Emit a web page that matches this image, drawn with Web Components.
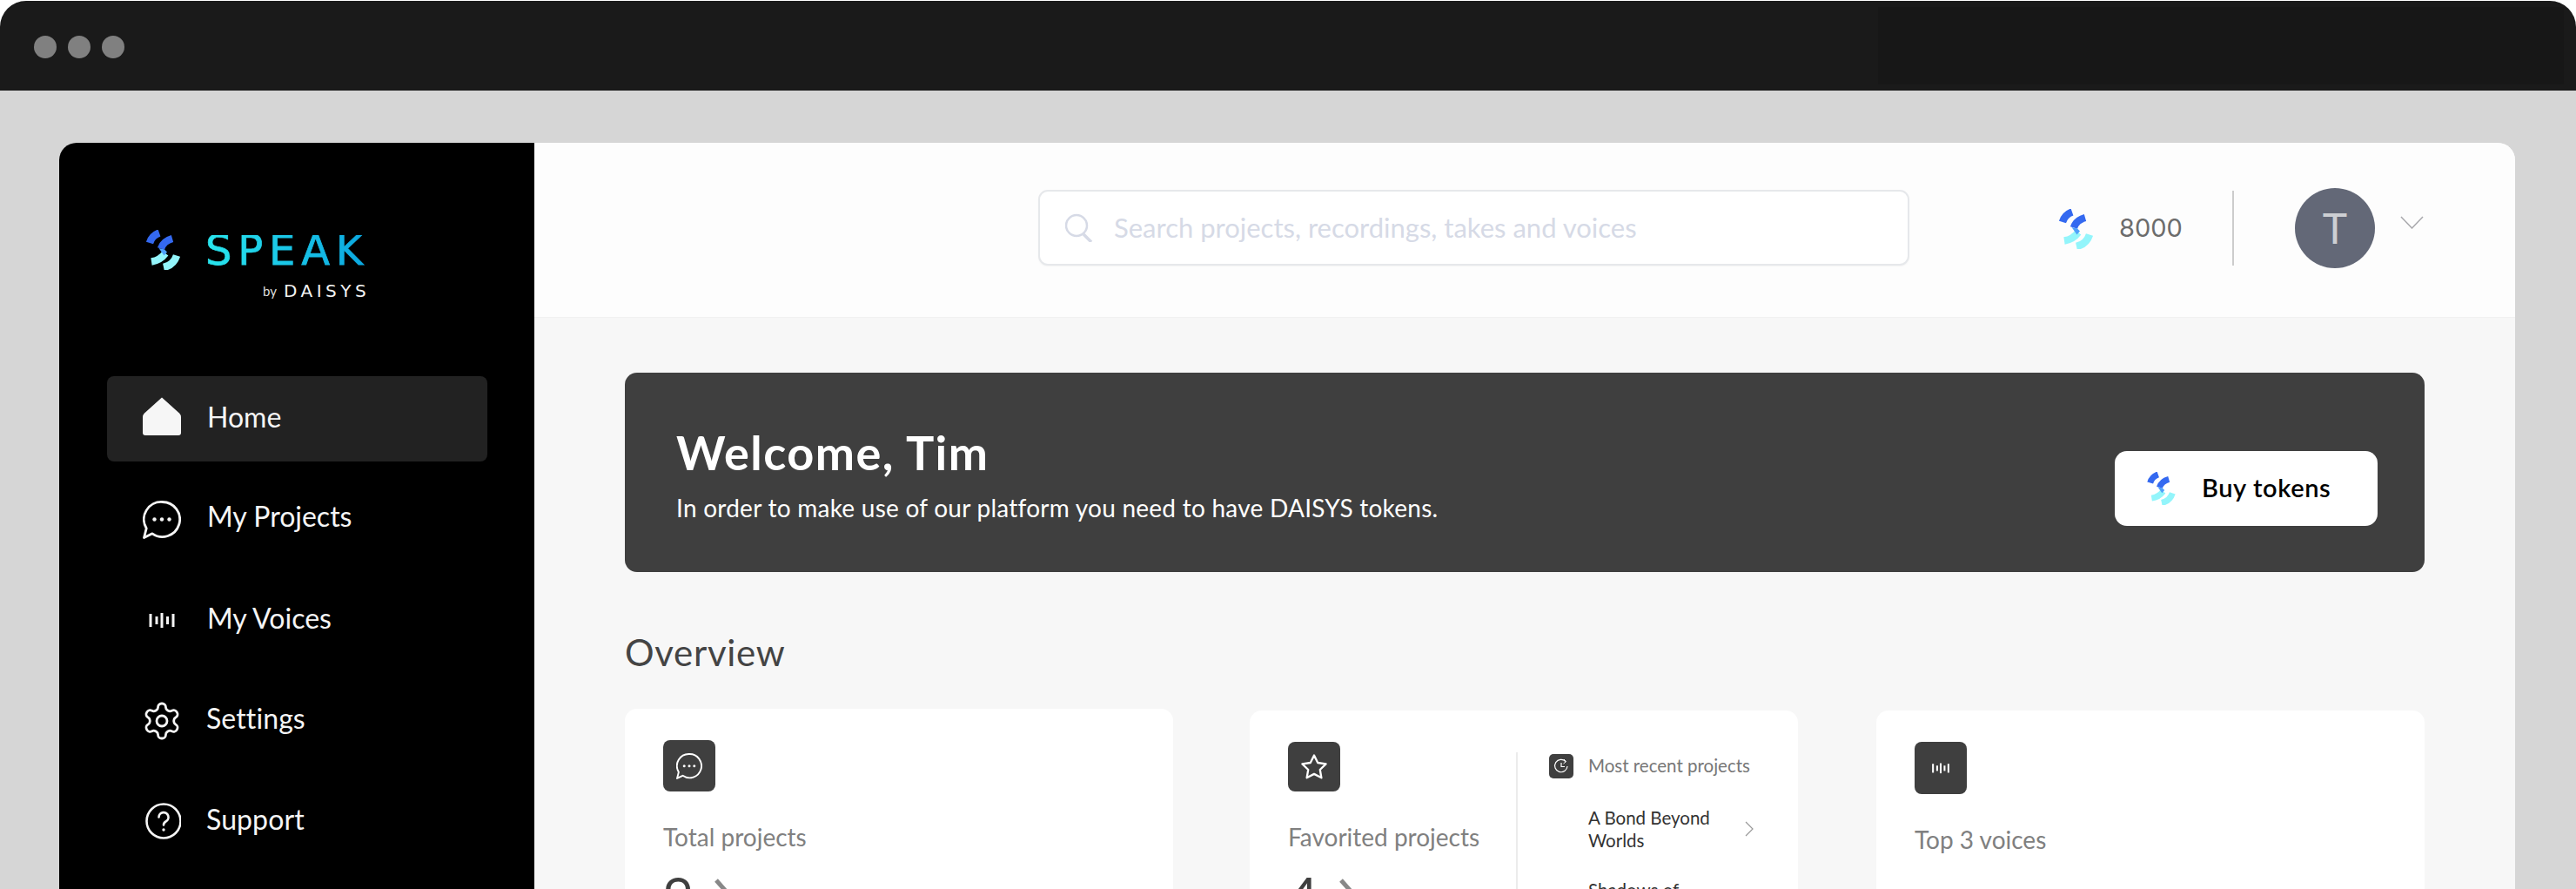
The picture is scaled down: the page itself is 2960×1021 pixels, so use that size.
<!DOCTYPE html>
<html><head><meta charset="utf-8"><title>Speak</title>
<style>html,body{margin:0;height:1021px;overflow:hidden;background:#fff;font-family:Lato,"Open Sans",sans-serif}</style>
</head><body>
<browser-frame>
  <app-sidebar slot="side">
    <nav-item active icon="home" label="Home"></nav-item>
    <nav-item icon="chat" label="My Projects"></nav-item>
    <nav-item icon="bars" label="My Voices"></nav-item>
    <nav-item icon="gear" label="Settings"></nav-item>
    <nav-item icon="help" label="Support"></nav-item>
  </app-sidebar>
  <app-header slot="head"></app-header>
  <welcome-banner></welcome-banner>
  <overview-section>
    <stat-card icon="chat" label="Total projects" value="9"></stat-card>
    <stat-card icon="star" label="Favorited projects" value="4" split>
      <recent-list></recent-list>
    </stat-card>
    <stat-card icon="bars" label="Top 3 voices" voices></stat-card>
  </overview-section>
</browser-frame>
<script>
const ICONS={
 home:'<svg viewBox="0 0 44 44" width="44" height="44"><path fill="#f6f6f6" d="M22 .5 42 18.500q2 2 2 4.500V41a3 3 0 0 1-3 3H3a3 3 0 0 1-3-3V23q0-2.500 2-4.500Z"/></svg>',
 chat:'<svg viewBox="0 0 44 44" width="44" height="44" fill="none" stroke="currentColor" stroke-width="2.800" stroke-linejoin="round"><path d="M22.500 1.500a20 20 0 1 1-11.500 36.300L1.500 42.500l2.700-10.700A20 20 0 0 1 22.500 1.500Z"/><g fill="currentColor" stroke="none"><circle cx="13.500" cy="21.500" r="2.200"/><circle cx="22" cy="21.500" r="2.200"/><circle cx="30.500" cy="21.500" r="2.200"/></g></svg>',
 bars:'<svg viewBox="0 0 44 44" width="44" height="44" fill="currentColor"><rect x="7.500" y="15" width="3" height="15"/><rect x="14.500" y="18" width="3" height="9"/><rect x="20.500" y="14" width="3" height="17"/><rect x="27" y="18" width="3" height="9"/><rect x="33.500" y="15" width="3" height="15"/></svg>',
 gear:'<svg viewBox="1 1 22 22" width="44" height="44" fill="none" stroke="currentColor" stroke-width="1.400" stroke-linejoin="round"><path d="M12.220 2h-.44a2 2 0 0 0-2 2v.18a2 2 0 0 1-1 1.730l-.43.250a2 2 0 0 1-2 0l-.15-.08a2 2 0 0 0-2.730.730l-.22.380a2 2 0 0 0 .730 2.730l.150.100a2 2 0 0 1 1 1.720v.510a2 2 0 0 1-1 1.740l-.15.090a2 2 0 0 0-.73 2.730l.220.380a2 2 0 0 0 2.730.730l.150-.08a2 2 0 0 1 2 0l.430.250a2 2 0 0 1 1 1.730V20a2 2 0 0 0 2 2h.440a2 2 0 0 0 2-2v-.18a2 2 0 0 1 1-1.730l.430-.25a2 2 0 0 1 2 0l.150.080a2 2 0 0 0 2.730-.73l.220-.39a2 2 0 0 0-.73-2.730l-.15-.08a2 2 0 0 1-1-1.740v-.5a2 2 0 0 1 1-1.740l.150-.09a2 2 0 0 0 .730-2.730l-.22-.38a2 2 0 0 0-2.730-.73l-.15.080a2 2 0 0 1-2 0l-.43-.25a2 2 0 0 1-1-1.730V4a2 2 0 0 0-2-2Z"/><circle cx="12" cy="12" r="3"/></svg>',
 help:'<svg viewBox="0 0 44 44" width="44" height="44" fill="none" stroke="currentColor" stroke-width="2.600" stroke-linecap="round"><circle cx="24" cy="22" r="19.500"/><path d="M18.500 17.500a5.500 5.500 0 1 1 8 5c-1.800 1-2.500 2-2.500 4"/><circle cx="24" cy="32" r="1.700" fill="currentColor" stroke="none"/></svg>',
 star:'<svg viewBox="1.500 1.500 21 21" width="32" height="32" fill="none" stroke="currentColor" stroke-width="1.600" stroke-linejoin="round"><path d="M12 2.500l2.950 6 6.550.95-4.750 4.620 1.120 6.530L12 17.520 6.130 20.600l1.120-6.530L2.500 9.450l6.550-.95Z"/></svg>'
};
function mark(w,h){return `<svg viewBox="0 0 39 46" width="${w}" height="${h}" fill="none" stroke-width="8.500"><path stroke="#93f5fb" d="M6 36.500Q16 35 22 27"/><path stroke="#93f5fb" d="M20 43Q31.500 40.500 35 29.500"/><path stroke="#3469f0" d="M4 15Q6.500 6.500 15 3.500"/><path stroke="#3469f0" d="M17 21.500Q19.500 13 30 10"/><path stroke="none" fill="#4fa0fa" d="M14.500 21l6.500 1.500 3 3-3.500 4Z"/></svg>`}
function def(name,html,init){customElements.define(name,class extends HTMLElement{constructor(){super();const r=this.attachShadow({mode:'open'});r.innerHTML=typeof html==='function'?html(this):html}connectedCallback(){if(init)init(this)}})}

def('browser-frame',`<style>
:host{display:block;height:1021px;overflow:hidden;padding-top:1px;box-sizing:border-box}
.bar{height:103px;border-radius:30px 30px 0 0;background:#1a1a1a;display:flex;align-items:center;gap:13px;padding:0 0 0 39px;box-sizing:border-box;position:relative;overflow:hidden}
.bar i{width:26px;height:26px;border-radius:50%;background:#808080;margin-top:3px}
.bar b{position:absolute;top:7px;bottom:7px;left:2158px;right:14px;background:#171717}
.stage{background:#d6d6d6;padding:60px 70px 0 68px;height:917px;box-sizing:border-box}
.win{height:900px;border-radius:20px 20px 0 0;overflow:hidden;display:flex;background:#f7f7f7}
.main{flex:1;min-width:0;display:flex;flex-direction:column}
.content{padding:63px 104px 0}
</style>
<div class="bar"><i></i><i></i><i></i><b></b></div>
<div class="stage"><div class="win"><slot name="side"></slot><div class="main"><slot name="head"></slot><div class="content"><slot></slot></div></div></div></div>`);

def('app-sidebar',`<style>
:host{display:block;width:546px;flex:none;background:#000;color:#f5f5f5;box-sizing:border-box;padding:100px 54px 0 55px}
.logo{display:flex;align-items:flex-start;padding-left:45px;height:168px;box-sizing:border-box}
.words{margin-left:29px;display:flex;flex-direction:column;align-items:flex-start}
.sp{font:400 48px/35px "DejaVu Sans",sans-serif;letter-spacing:6.800px;margin-top:6px;background:linear-gradient(90deg,#29e6ee,#0aa6e0);-webkit-background-clip:text;background-clip:text;color:transparent;-webkit-text-stroke:.8px transparent}
.by{font:400 15px/20px Lato,sans-serif;color:#ddd;margin:19px 0 0 66px;display:flex;align-items:center;gap:8px}
.by b{font:400 20px/20px "DejaVu Sans",sans-serif;letter-spacing:4.500px;color:#f2f2f2}
nav{display:flex;flex-direction:column;gap:17.500px}
</style>
<div class="logo">${mark(39,46)}<div class="words"><div class="sp">SPEAK</div><div class="by">by <b>DAISYS</b></div></div></div>
<nav><slot></slot></nav>`);

def('nav-item',h=>`<style>
:host{display:flex;align-items:center;height:98px;border-radius:8px;padding-left:41px;gap:30px;color:#f5f5f5;font:400 32px/40px Lato,sans-serif}
:host([active]){background:#222}
:host([active]) .ic{margin-bottom:6px}
.ic{width:44px;height:44px;display:flex}
.tx{padding-bottom:4px}
:host([icon="chat"]) .tx{padding-bottom:7px}
:host([icon="gear"]) .tx{padding-bottom:6px}
:host([icon="gear"]) .tx,:host([icon="help"]) .tx{margin-left:-1px;letter-spacing:.1px}
</style><span class="ic">${ICONS[h.getAttribute('icon')]}</span><span class="tx">${h.getAttribute('label')}</span>`);

def('app-header',`<style>
:host{display:flex;align-items:center;height:201px;flex:none;background:#fdfdfd;border-bottom:1px solid #f1f1f1;box-sizing:border-box;padding-left:579px;color:#6c6c6c}
.search{width:1001px;height:87px;box-sizing:border-box;border:2px solid #e6e8eb;border-radius:11px;background:#fff;display:flex;align-items:center;padding-left:29px;gap:24px;color:#d6dae6;font:400 31px/40px Lato,sans-serif;box-shadow:0 1px 2px #0000000a;margin-top:-5px}
.search span{padding-bottom:2px}
.tok{margin-left:172px;display:flex;align-items:center;gap:30px;font:400 29px/40px Inter,sans-serif;margin-top:6px}
.tok svg{margin-top:-9px}
.tok span{padding-bottom:10px}
.div{width:2px;height:86px;background:#ccc;margin:-4px 0 0 57px}
.av{width:92px;height:92px;border-radius:50%;background:#636877;color:#cdcfd3;font:400 48px/92px Lato,sans-serif;text-align:center;margin:-4px 0 0 70px}
.chev{margin-left:29px;margin-top:-17px}
</style>
<div class="search"><svg width="32" height="33" viewBox="0 0 32 33" fill="none" stroke="#d6dae6" stroke-width="2.500"><circle cx="13" cy="14" r="12"/><path stroke-width="3.500" d="M21 24l9 9"/></svg><span>Search projects, recordings, takes and voices</span></div>
<div class="tok">${mark(39,46)}<span>8000</span></div>
<div class="div"></div><div class="av">T</div>
<svg class="chev" width="27" height="15" viewBox="0 0 27 15" fill="none" stroke="#a9a9ad" stroke-width="1.500"><path d="M1 1l12.500 13L26 1"/></svg>`);

def('welcome-banner',`<style>
:host{display:flex;align-items:center;justify-content:space-between;height:229px;border-radius:14px;background:#3f3f3f;color:#fff;box-sizing:border-box;padding:0 54px 0 59px}
.tx{margin-top:6px}
h1{margin:0;font:700 54px/60px Lato,sans-serif;letter-spacing:1.500px}
p{margin:15px 0 0;font:400 28px/36px Lato,sans-serif;letter-spacing:.25px}
.btn{width:302px;height:86px;border-radius:14px;background:#fff;color:#000;display:flex;align-items:center;box-sizing:border-box;padding-left:37px;gap:30px;font:600 29px/36px Lato,sans-serif;letter-spacing:.6px;margin-top:37px}
.btn span{padding-bottom:3px}
</style><div class="tx"><h1>Welcome, Tim</h1><p>In order to make use of our platform you need to have DAISYS tokens.</p></div>
<div class="btn">${mark(33,38)}<span>Buy tokens</span></div>`);

def('overview-section',`<style>
:host{display:block}
h2{margin:0;padding-top:67px;font:400 42px/50px Lato,sans-serif;letter-spacing:.7px;color:#444;height:157px;box-sizing:border-box}
.g{display:grid;grid-template-columns:repeat(3,1fr);gap:89px;align-items:start}
</style><h2>Overview</h2><div class="g"><slot></slot></div>`);

def('stat-card',h=>{const v=h.getAttribute('value');const ic=h.getAttribute('icon');return `<style>
:host{display:flex;background:#fff;border-radius:14px;height:400px;box-sizing:border-box;padding:36px 0 0 44px;color:#808080;font:400 28px/34px Lato,sans-serif}
:host([split]),:host([voices]){margin-top:2px}
:host([split]){margin-left:-1px;margin-right:1px}
.l{width:261px;flex:none}
:host([split]) .l{width:262px}
.box{width:60px;height:59px;border-radius:8px;background:#3f3f3f;color:#fff;display:flex;align-items:center;justify-content:center;margin-bottom:35px}
:host([split]) .box{height:57px;margin-bottom:35px}
:host([voices]) .box{height:60px;margin-bottom:35px}
.box svg{width:30px;height:30px}
.n{font:400 60px/70px Lato,sans-serif;color:#3f3f3f;margin-top:15px;display:flex;align-items:flex-start;gap:24px}
.n svg{margin-top:16px}
.r{border-left:2px solid #ececec;margin-top:12px;padding-left:36px;flex:1;min-width:0}
</style><div class="l"><div class="box">${ICONS[ic]}</div><div>${h.getAttribute('label')}</div>${v?`<div class="n">${v}<svg width="20" height="40" viewBox="0 0 20 40" fill="none" stroke="#888" stroke-width="5"><path d="M2 2l16 18L2 38"/></svg></div>`:''}</div>${h.hasAttribute('split')?'<div class="r"><slot></slot></div>':''}`});

def('recent-list',`<style>
:host{display:block;font:400 20.500px/26px Lato,sans-serif;color:#333;padding-right:51px}
.t{display:flex;align-items:center;gap:17px;color:#777;height:28px;margin-top:2px;white-space:nowrap}
.t em{font-style:normal;padding-bottom:3px}
.sb{width:28px;height:28px;border-radius:5px;background:#3f3f3f;flex:none;display:flex;align-items:center;justify-content:center}
.it{display:flex;align-items:center;justify-content:space-between;padding-left:45px;margin-top:32px}
.it span{width:150px}
.it+.it{margin-top:31px}
</style>
<div class="t"><span class="sb"><svg width="18" height="18" viewBox="0 0 18 18" fill="none" stroke="#fff" stroke-width="1.200"><path d="M14 3.500A7.200 7.200 0 1 0 16 9"/><path d="M9 5v4.500h4"/><path d="M12 1l2.500 2.700L11.500 6" stroke-width="1"/></svg></span><em>Most recent projects</em></div>
<div class="it"><span>A Bond Beyond Worlds</span><svg width="10" height="18" viewBox="0 0 10 18" fill="none" stroke="#999" stroke-width="1.200"><path d="M1 1l8 8-8 8"/></svg></div>
<div class="it"><span>Shadows of Tomorrow</span><svg width="10" height="18" viewBox="0 0 10 18" fill="none" stroke="#999" stroke-width="1.200"><path d="M1 1l8 8-8 8"/></svg></div>`);
</script>
</body></html>
